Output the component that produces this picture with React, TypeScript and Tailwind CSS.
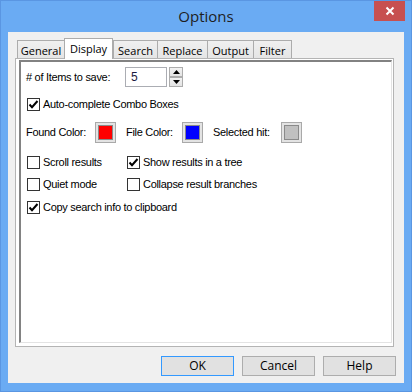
import React from "react";

const bodyFont = { fontFamily: '"Liberation Sans", Arial, sans-serif' };

function Check({ checked, label }: { checked?: boolean; label: string }) {
  return (
    <div className="flex items-center h-[13px]">
      <div className="w-[13px] h-[13px] border border-[#333333] bg-white flex items-center justify-center shrink-0">
        {checked && (
          <svg width="11" height="11" viewBox="0 0 11 11">
            <path d="M1.5 5.5 L4 8.2 L9.5 2" fill="none" stroke="#000" strokeWidth="2" />
          </svg>
        )}
      </div>
      <span className="ml-[3px] text-[11px] tracking-[-0.3px] text-black leading-none whitespace-nowrap">{label}</span>
    </div>
  );
}

function Swatch({ color }: { color: string }) {
  return (
    <div className="w-[21px] h-[21px] border border-[#a9a9a9] bg-[#e3e3e3] p-[2px] shrink-0">
      <div className="w-full h-full border border-[#8a8a8a]" style={{ background: color }} />
    </div>
  );
}

function Tab({ label, w, selected, last }: { label: string; w: number; selected?: boolean; last?: boolean }) {
  if (selected) {
    return (
      <div
        className="relative z-10 h-[21px] -mb-px bg-white border-t border-l border-r border-[#acacac] flex justify-center pt-[2px] text-[11px] text-black"
        style={{ width: w }}
      >
        {label}
      </div>
    );
  }
  return (
    <div
      className={`h-[18px] bg-gradient-to-b from-[#f0f0f0] to-[#e5e5e5] border-t border-l border-[#acacac] flex justify-center pt-[2px] text-[11px] text-black ${last ? "border-r" : ""}`}
      style={{ width: w }}
    >
      {label}
    </div>
  );
}

function Btn({ label, def }: { label: string; def?: boolean }) {
  return (
    <div
      className={`w-[73px] h-[20px] flex items-center justify-center text-[12px] text-black bg-[#e1e1e1] border ${def ? "border-[#3399ff]" : "border-[#adadad]"}`}
    >
      {label}
    </div>
  );
}

export default function App() {
  return (
    <div className="w-[412px] h-[392px] bg-[#6aabf3] border border-[#5a96e2] flex flex-col" style={bodyFont}>
      <div className="relative h-[31px] flex items-center justify-center">
        <span className="text-[15px] text-[#1e1e1e] mt-[-1px]" style={{ fontFamily: '"Open Sans", "Noto Sans", sans-serif' }}>
          Options
        </span>
        <div className="absolute top-0 right-[6px] w-[31px] h-[20px] bg-[#c75050] flex items-center justify-center">
          <svg width="10" height="10" viewBox="0 0 10 10">
            <path d="M1.5 1.5 L8.5 8.5 M8.5 1.5 L1.5 8.5" stroke="#fff" strokeWidth="2" />
          </svg>
        </div>
      </div>
      <div className="ml-[7px] w-[396px] h-[351px] bg-[#f0f0f0] pt-[6px] pl-[7px] flex flex-col">
        <div className="flex items-end h-[20px] pl-[2px]" style={{ fontFamily: '"Open Sans", "Noto Sans", sans-serif' }}>
          <Tab label="General" w={47} />
          <Tab label="Display" w={49} selected />
          <Tab label="Search" w={44} />
          <Tab label="Replace" w={50} />
          <Tab label="Output" w={46} />
          <Tab label="Filter" w={39} last />
        </div>
        <div className="w-[379px] h-[289px] border border-[#b4b4b4] bg-white">
          <div className="ml-[3px] mt-[1px] w-[373px] h-[283px] border-t-2 border-l-2 border-[#828282] border-r border-b border-r-[#e3e3e3] border-b-[#e3e3e3] flex flex-col">
            <div className="mt-[5px] pl-[5px] flex items-center h-[20px]">
              <span className="w-[99px] text-[11px] tracking-[-0.3px] text-black whitespace-nowrap">
                # of Items to save:
              </span>
              <div className="w-[42px] h-[20px] border border-[#abadb3] bg-white flex items-center pl-[5px] text-[12px] text-[#1a1a40]">
                5
              </div>
              <div className="ml-[2px] w-[14px] h-[20px] flex flex-col justify-between">
                <div className="h-[10px] border border-[#acacac] bg-gradient-to-b from-[#f2f2f2] to-[#e4e4e4] flex items-center justify-center">
                  <svg width="7" height="4" viewBox="0 0 7 4">
                    <path d="M0 4 L3.5 0 L7 4 Z" fill="#000" />
                  </svg>
                </div>
                <div className="h-[10px] border border-[#acacac] bg-gradient-to-b from-[#f2f2f2] to-[#e4e4e4] flex items-center justify-center">
                  <svg width="7" height="4" viewBox="0 0 7 4">
                    <path d="M0 0 L7 0 L3.5 4 Z" fill="#000" />
                  </svg>
                </div>
              </div>
            </div>
            <div className="mt-[11px] pl-[6px]">
              <Check checked label="Auto-complete Combo Boxes" />
            </div>
            <div className="mt-[11px] pl-[5px] flex items-center h-[21px] text-[11px] tracking-[-0.3px] text-black whitespace-nowrap">
              <span className="w-[69px]">Found Color:</span>
              <Swatch color="#ff0000" />
              <span className="ml-[10px] w-[56px]">File Color:</span>
              <Swatch color="#0000ff" />
              <span className="ml-[10px] w-[68px]">Selected hit:</span>
              <Swatch color="#c0c0c0" />
            </div>
            <div className="mt-[13px] pl-[6px] flex">
              <div className="w-[100px]">
                <Check label="Scroll results" />
              </div>
              <Check checked label="Show results in a tree" />
            </div>
            <div className="mt-[9px] pl-[6px] flex">
              <div className="w-[100px]">
                <Check label="Quiet mode" />
              </div>
              <Check label="Collapse result branches" />
            </div>
            <div className="mt-[10px] pl-[6px]">
              <Check checked label="Copy search info to clipboard" />
            </div>
          </div>
        </div>
        <div className="mt-[9px] flex justify-end gap-[8px] pr-[8px]" style={{ fontFamily: '"Open Sans", "Noto Sans", sans-serif' }}>
          <Btn label="OK" def />
          <Btn label="Cancel" />
          <Btn label="Help" />
        </div>
      </div>
    </div>
  );
}
